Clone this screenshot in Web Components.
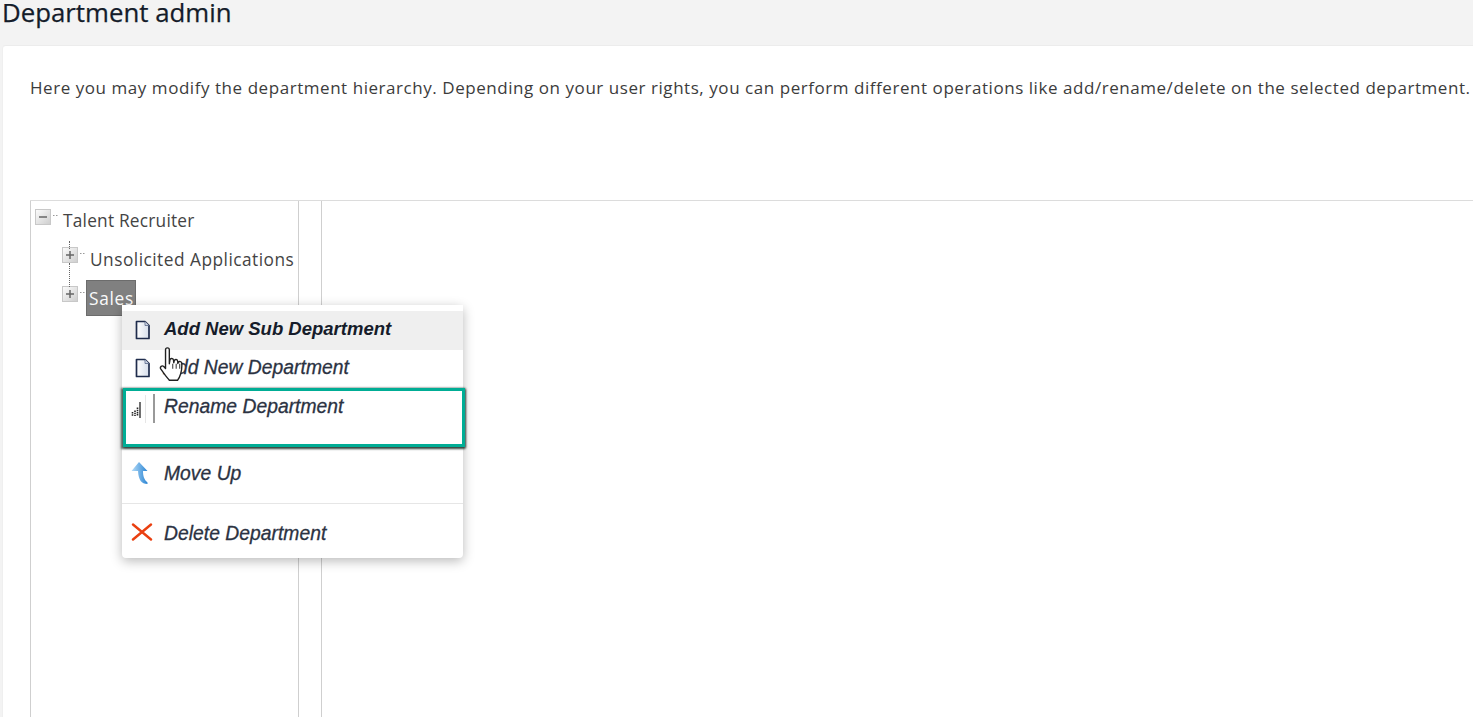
<!DOCTYPE html>
<html><head><meta charset="utf-8"><style>
html,body{margin:0;height:100%;overflow:hidden;background:#f3f3f3}
body{font-family:"Open Sans","Noto Sans",sans-serif;color:#333}
</style></head><body>
<dept-page>
  <page-title slot="title">Department admin</page-title>
  <span slot="intro">Here you may modify the department hierarchy. Depending on your user rights, you can perform different operations like add/rename/delete on the selected department.</span>
  <tree-pane slot="tree">
    <tree-node kind="minus" level="0">Talent Recruiter</tree-node>
    <tree-node kind="plus" level="1" conn="0,8">Unsolicited Applications</tree-node>
    <tree-node kind="plus" level="1" selected conn="-17,24">Sales</tree-node>
  </tree-pane>
  <context-menu slot="overlay">
    <menu-row icon="page" hover h="45">Add New Sub Department</menu-row>
    <menu-row icon="page" h="39">Add New Department</menu-row>
    <menu-row icon="bars" h="61" top>Rename Department</menu-row>
    <menu-row icon="up" h="54" sep>Move Up</menu-row>
    <menu-row icon="x" h="54">Delete Department</menu-row>
  </context-menu>
</dept-page>
<script>
class DeptPage extends HTMLElement{constructor(){super();this.attachShadow({mode:'open'}).innerHTML=`<style>
:host{display:flex;flex-direction:column;height:717px;width:1473px;position:relative;overflow:hidden}
.head{height:45px;flex:none;padding-left:2px;box-sizing:border-box}
.card{flex:1;margin-left:2px;background:#fff;border-radius:4px 0 0 0;border-top:1px solid #ececec;border-left:1px solid #efefef;padding:30px 0 0 27px;display:flex;flex-direction:column;min-height:0}
.intro{font-size:17px;letter-spacing:.55px;line-height:24px;color:#3c3c3c;white-space:nowrap;height:124px;flex:none}
.panel{flex:1;display:grid;grid-template-columns:269px 23px 1fr;border-top:1px solid #dcdcdc;min-height:0}
.tree{border-left:1px solid #cfcfcf;border-right:1px solid #cfcfcf;box-sizing:border-box}
.gap{border-right:1px solid #cfcfcf}
</style><div class="head"><slot name="title"></slot></div>
<div class="card"><div class="intro"><slot name="intro"></slot></div>
<div class="panel"><div class="tree"><slot name="tree"></slot></div><div class="gap"></div><div></div></div></div>
<slot name="overlay"></slot>`}}
class PageTitle extends HTMLElement{constructor(){super();this.attachShadow({mode:'open'}).innerHTML=`<style>
:host{display:block;font-size:25.8px;line-height:25px;color:#141c2a;font-weight:400;-webkit-text-stroke:.25px #141c2a}</style><slot></slot>`}}
class TreePane extends HTMLElement{constructor(){super();this.attachShadow({mode:'open'}).innerHTML=`<style>
:host{display:block;padding-top:1px;position:relative}</style><slot></slot>`}}
class TreeNode extends HTMLElement{constructor(){super();
const lvl=+this.getAttribute('level'),plus=this.getAttribute('kind')==='plus',sel=this.hasAttribute('selected'),con=this.getAttribute('conn');
const [ct,ch]=con?con.split(','):[0,0];
this.attachShadow({mode:'open'}).innerHTML=`<style>
:host{display:flex;align-items:flex-start;height:39px;padding-left:${4+lvl*27}px;position:relative;box-sizing:border-box}
svg{flex:none;margin-top:${lvl?6:7}px;width:26px;height:18px}
.label{font-size:17.300px;letter-spacing:${lvl?.49:.22}px;line-height:24px;color:#444;margin-top:7px;padding:0 3px 0 2px;white-space:nowrap}
.sel{background:#808080;color:#fafafa;border:1px solid #6c6c6c;height:36px;margin:0 0 0 -2px;padding:6px 2px 0;box-sizing:border-box;width:50px;letter-spacing:.7px}
.v{position:absolute;left:${4+lvl*27+7}px;top:${ct}px;height:${ch}px;border-left:1px dotted #666}
</style>${con?'<i class="v"></i>':''}<svg viewBox="0 0 26 18"><defs><linearGradient id="g" x1="0" y1="0" x2="1" y2="1"><stop offset="0" stop-color="#fdfdfd"/><stop offset="1" stop-color="#cdcdcd"/></linearGradient></defs>
<rect x=".5" y=".5" width="15" height="15" fill="url(#g)" stroke="#c8c8c8"/><path d="M4 8h8${plus?'M8 4v8':''}" stroke="#666" stroke-width="1.500"/><path d="M18 6.500h6" stroke="#999" stroke-dasharray="1.500 1.500"/></svg>
<span class="label${sel?' sel':''}"><slot></slot></span>`}}
class ContextMenu extends HTMLElement{constructor(){super();this.attachShadow({mode:'open'}).innerHTML=`<style>
:host{display:block;position:absolute;left:122px;top:305px;width:341px;background:#fff;border-radius:4px;box-shadow:0 3px 12px rgba(0,0,0,.28)}
.hl{position:absolute;left:1px;top:83px;width:342px;height:59px;box-sizing:border-box;border:3px solid #00ad95;box-shadow:-1px 1px 2px 1px rgba(30,50,40,.75),1px 1px 2px rgba(30,50,40,.75);pointer-events:none}
.hand{position:absolute;left:37px;top:41px;width:27px;height:38px}
</style><slot></slot><div class="hl"></div>
<svg class="hand" viewBox="0 0 21 30"><path d="M5 3c0-2 3-2 3 0v11l.5-3c.3-1.600 2.700-1.400 2.800.2l.2 2 .4-1.600c.4-1.400 2.600-1.200 2.700.4l.1 1.800.5-1c.6-1 2.500-.6 2.600.8.2 3-.1 6-.9 8.500-.6 2-1.200 3.500-2.400 4.900H8c-1.200-1.500-2.600-3-4-5L1.200 18c-.9-1.500 1-3.100 2.400-1.800L5 17.700z" fill="#fff" stroke="#222" stroke-width="1.100" stroke-linejoin="round"/><path d="M10.700 14v4M13.400 14v4M16.200 14v4" stroke="#333" stroke-width=".8"/></svg>`}}
const icons={
page:`<svg width="16" height="20" viewBox="0 0 16 20"><defs><linearGradient id="p" x1="0" x2="1"><stop offset="0" stop-color="#fff"/><stop offset="1" stop-color="#d6deeb"/></linearGradient></defs><path d="M1.500 1.500h8.500l4 4v13h-12.500z" fill="url(#p)" stroke="#1f2c4c" stroke-width="1.700" stroke-linejoin="round"/><path d="M10 1.500v4h4" fill="#cdd6e6" stroke="#5a6a8a" stroke-width=".8"/></svg>`,
bars:`<svg width="26" height="30" viewBox="0 0 26 30"><path d="M1.500 19v4M4 17.500v5.500M6.500 14.500v8.500" stroke="#222" stroke-width="1.600" stroke-dasharray="1.500 .7"/><path d="M9 9v16" stroke="#222" stroke-width="1.300"/><path d="M14.500 2v29" stroke="#e6e6e6"/><path d="M23 1v29" stroke="#777" stroke-width="1.500"/></svg>`,
up:`<svg width="20" height="24" viewBox="0 0 20 24"><defs><linearGradient id="u" x1="0" y1="0" x2="1" y2="0"><stop offset="0" stop-color="#b5dcf8"/><stop offset="1" stop-color="#2d86d4"/></linearGradient></defs><path d="M9 1l8.500 9h-4.500c0 5 1 8.500 4.500 11.500v1.500c-6 0-9-4-9.500-13h-6.500z" fill="url(#u)"/></svg>`,
x:`<svg width="22" height="18" viewBox="0 0 22 18"><path d="M2 1.500l18 15M20 1.500l-18 15" stroke="#ea3f10" stroke-width="2.400" stroke-linecap="round"/></svg>`};
const ipad={page:'margin:6px 0 0 13px;width:29px',bars:'margin:4px 0 0 9px;width:33px',up:'margin:11px 0 0 8px;width:34px',x:'margin:19px 0 0 9px;width:33px'};
class MenuRow extends HTMLElement{constructor(){super();
const ic=this.getAttribute('icon'),h=this.getAttribute('h'),hov=this.hasAttribute('hover'),top=this.hasAttribute('top');
const sep=this.hasAttribute('sep');
const tt=ic==='page'?(hov?12:6):top?6:ic==='up'?12:ic==='x'?18:6;
const ipadv={page:hov?'margin-top:15px':'margin-top:8px',bars:'',up:'',x:''}[ic];
this.attachShadow({mode:'open'}).innerHTML=`<style>
:host{display:flex;height:${h}px;box-sizing:border-box;align-items:flex-start;${hov?'background:linear-gradient(#fff 0 6px,#efefef 6px);':''}${sep?'border-bottom:1px solid #e6e6e6;':''}}
.i{flex:none;display:block;${ipad[ic]};${ipadv}}
.t{font:italic 400 19.300px/24px "Liberation Sans",Arial,sans-serif;color:#2b3242;margin-top:${tt}px;white-space:nowrap;${hov?'font-weight:700;font-size:18.500px;color:#161c2a;':'-webkit-text-stroke:.3px #2b3242;letter-spacing:.03px;'}}
</style><span class="i">${icons[ic]}</span><span class="t"><slot></slot></span>`}}
customElements.define('dept-page',DeptPage);customElements.define('page-title',PageTitle);customElements.define('tree-pane',TreePane);customElements.define('tree-node',TreeNode);customElements.define('context-menu',ContextMenu);customElements.define('menu-row',MenuRow);
</script>
</body></html>
